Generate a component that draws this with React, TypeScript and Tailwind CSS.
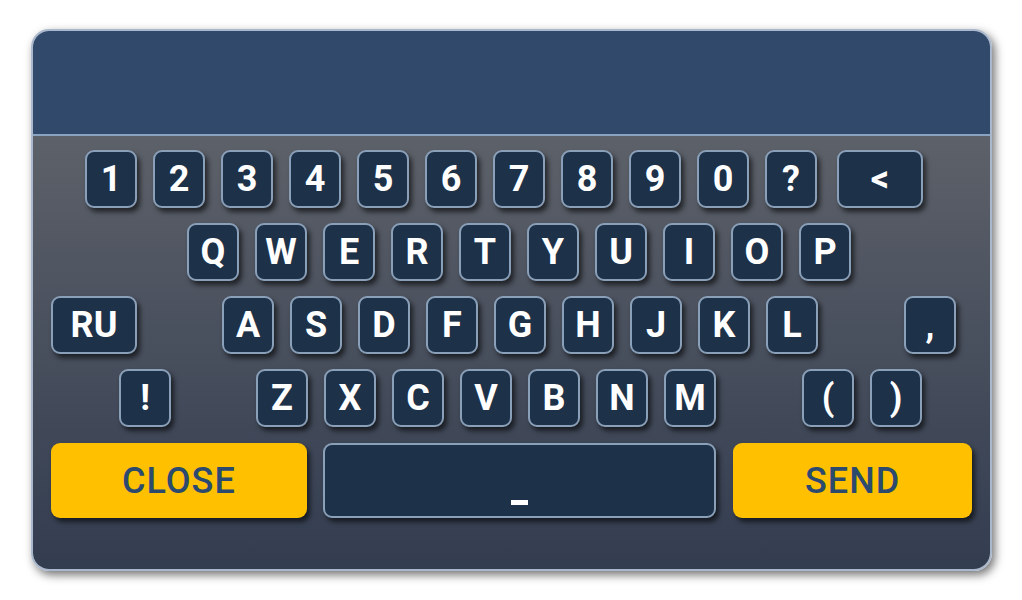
import React from 'react';

const font = { fontFamily: 'Roboto, "Liberation Sans", sans-serif' };

const Key: React.FC<{ label: string; wide?: boolean; className?: string }> = ({ label, wide, className = '' }) => (
  <div
    className={`${wide ? 'w-[86px]' : 'w-[52px]'} h-[58px] shrink-0 flex items-center justify-center rounded-[9px] border-2 border-[#8a9fb8] bg-[#1d3149] text-white text-[36px] font-bold leading-none shadow-[3px_4px_5px_rgba(0,0,0,0.6)] ${className}`}
  >
    {label}
  </div>
);

const row1 = ['1', '2', '3', '4', '5', '6', '7', '8', '9', '0', '?'];
const row2 = ['Q', 'W', 'E', 'R', 'T', 'Y', 'U', 'I', 'O', 'P'];
const row3 = ['A', 'S', 'D', 'F', 'G', 'H', 'J', 'K', 'L'];
const row4 = ['Z', 'X', 'C', 'V', 'B', 'N', 'M'];

export default function App() {
  return (
    <div className="w-[1022px] h-[600px] bg-white pt-[29px] pl-[31px]" style={font}>
      <div className="w-[961px] h-[542px] rounded-[18px] border-2 border-[#a9b8cc] overflow-hidden flex flex-col shadow-[3px_4px_10px_rgba(0,0,0,0.55)]">
        {/* display */}
        <div className="h-[105px] shrink-0 bg-[#31496a] border-b-2 border-[#8aa3c0]" />

        {/* keys */}
        <div className="flex-1 bg-gradient-to-b from-[#5d6169] to-[#333d50] px-[18px] pt-[14px] flex flex-col gap-[15px]">
          <div className="flex gap-4 pl-[34px]">
            {row1.map((k) => (
              <Key key={k} label={k} />
            ))}
            <Key label="<" wide className="ml-1" />
          </div>

          <div className="flex gap-4 pl-[136px]">
            {row2.map((k) => (
              <Key key={k} label={k} />
            ))}
          </div>

          <div className="flex gap-4">
            <Key label="RU" wide />
            <div className="w-[53px] shrink-0" />
            {row3.map((k) => (
              <Key key={k} label={k} />
            ))}
            <div className="w-[54px] shrink-0" />
            <Key label="," />
          </div>

          <div className="flex gap-4 pl-[68px]">
            <Key label="!" />
            <div className="w-[53px] shrink-0" />
            {row4.map((k) => (
              <Key key={k} label={k} />
            ))}
            <div className="w-[54px] shrink-0" />
            <Key label="(" />
            <Key label=")" />
          </div>

          <div className="flex gap-4 h-[75px] mt-px">
            <div className="w-[256px] rounded-[9px] bg-[#ffc000] flex items-center justify-center text-[36px] font-medium tracking-[1px] text-[#2b4a6e] shadow-[3px_4px_5px_rgba(0,0,0,0.6)]">
              CLOSE
            </div>
            <div className="w-[394px] rounded-[9px] border-2 border-[#8a9fb8] bg-[#1d3149] flex items-end justify-center pb-[11px] shadow-[3px_4px_5px_rgba(0,0,0,0.6)]">
              <div className="w-[17px] h-[5px] bg-white" />
            </div>
            <div className="w-[239px] ml-px rounded-[9px] bg-[#ffc000] flex items-center justify-center text-[36px] font-medium tracking-[1px] text-[#2b4a6e] shadow-[3px_4px_5px_rgba(0,0,0,0.6)]">
              SEND
            </div>
          </div>
        </div>
      </div>
    </div>
  );
}
